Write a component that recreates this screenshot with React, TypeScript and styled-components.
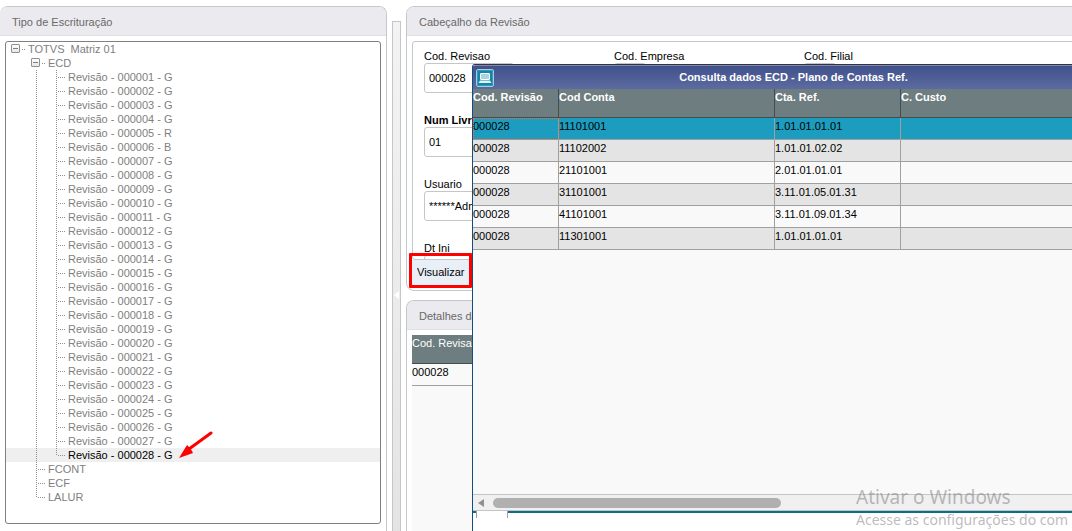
import React from 'react';
import styled, { createGlobalStyle } from 'styled-components';

const GlobalStyle = createGlobalStyle`
  *, *::before, *::after { box-sizing: border-box; }
  html, body, #root { height: 100%; }
  body {
    margin: 0;
    background: #fff;
    color: #000;
    font: 11px/14px "Liberation Sans", Arial, sans-serif;
    overflow: hidden;
  }
  button, input { font: inherit; color: inherit; }
  h1, h2, ul { margin: 0; padding: 0; }
`;

const Page = styled.main`
  display: grid;
  grid-template-columns: minmax(0, 387fr) 9px minmax(0, 666fr);
  column-gap: 5px;
  height: 100vh;
  padding-top: 6px;
`;

const Panel = styled.section<{ $closed?: boolean }>`
  display: flex;
  flex-direction: column;
  flex: ${(p) => (p.$closed ? 'none' : '1')};
  min-height: 0;
  border: 1px solid #c3c7c7;
  border-bottom-width: ${(p) => (p.$closed ? '1px' : '0')};
  border-radius: ${(p) => (p.$closed ? '8px' : '8px 8px 0 0')};
  background: #fff;
`;

const LeftPanel = styled(Panel)`
  border-left: 0;
`;

const PanelTitle = styled.h2`
  flex: none;
  height: 29px;
  padding: 8px 12px 0;
  border-bottom: 1px solid #e0e0e2;
  border-radius: 7px 7px 0 0;
  background: #ebeaef;
  color: #696969;
  font-size: 11px;
  font-weight: normal;
  line-height: 14px;
`;

const TreeBox = styled.div`
  flex: 1;
  min-height: 0;
  margin: 5px 5px 7px;
  border: 1px solid #808080;
  border-radius: 3px;
`;

const TreeList = styled.ul`
  list-style: none;
`;

const TreeRow = styled.div<{ $selected?: boolean }>`
  display: flex;
  height: 14px;
  padding-left: 2px;
  background: ${(p) => (p.$selected ? '#efefef' : 'transparent')};
  color: ${(p) => (p.$selected ? '#000' : '#808080')};
  white-space: pre;
`;

const TreeLabel = styled.span`
  position: relative;
`;

type GuideKind = 'blank' | 'line' | 'branch' | 'end' | 'toggle';

const down = 'repeating-linear-gradient(to bottom, #909090 0 1px, transparent 1px 2px)';
const across = 'repeating-linear-gradient(to right, #909090 0 1px, transparent 1px 2px)';
const guideLines: Record<GuideKind, string> = {
  blank: 'none',
  line: `${down} 8px 0 / 1px 14px no-repeat`,
  branch: `${down} 8px 0 / 1px 14px no-repeat, ${across} 10px 7px / 8px 1px no-repeat`,
  end: `${down} 8px 0 / 1px 8px no-repeat, ${across} 10px 7px / 8px 1px no-repeat`,
  toggle: `${across} 14px 7px / 4px 1px no-repeat`,
};

const Guide = styled.span<{ $kind: GuideKind }>`
  flex: none;
  display: flex;
  width: 20px;
  height: 14px;
  padding: 2px 0 0 3px;
  background: ${(p) => guideLines[p.$kind]};
`;

const Toggle = styled.button`
  display: flex;
  align-items: center;
  width: 9px;
  height: 9px;
  padding: 0 1px;
  border: 1px solid #909090;
  border-radius: 1px;
  background: linear-gradient(#fff, #e6e6e6);
  &::before {
    content: '';
    width: 5px;
    height: 1px;
    background: #808080;
  }
`;

const PointerArrow = styled.svg`
  position: absolute;
  left: calc(100% + 6px);
  bottom: 3px;
`;

const Splitter = styled.div`
  display: flex;
  align-items: center;
  margin-top: 15px;
  padding: 37px 0 0 1px;
  border: 1px solid #c3c7c7;
  border-bottom: 0;
  background: linear-gradient(#f3f3f3, #e4e4e4);
`;

const RightColumn = styled.div`
  position: relative;
  display: flex;
  flex-direction: column;
  gap: 9px;
  min-width: 0;
  margin-right: -8px;
`;

const FormBox = styled.form`
  height: 219px;
  margin: 5px 5px 0;
  padding: 8px 11px 0;
  border: 1px solid #c3c7c7;
  border-radius: 3px;
  overflow: hidden;
`;

const FieldGrid = styled.div`
  display: grid;
  grid-template-columns: repeat(3, 190px);
  row-gap: 21px;
`;

const Field = styled.label<{ $strong?: boolean; $first?: boolean }>`
  display: flex;
  flex-direction: column;
  grid-column: ${(p) => (p.$first ? '1' : 'auto')};
  line-height: 13px;
  font-weight: ${(p) => (p.$strong ? 'bold' : 'normal')};
`;

const FieldInput = styled.input<{ $wide?: boolean }>`
  width: ${(p) => (p.$wide ? '90px' : '32px')};
  height: 30px;
  padding: 0 4px;
  border: 1px solid #c3c7c7;
  border-radius: 3px;
  background: #fff;
  font-weight: normal;
`;

const Actions = styled.div`
  position: relative;
  padding: 0 0 5px 5px;
`;

const ViewButton = styled.button`
  display: block;
  height: 25px;
  padding: 0 8px 2px 5px;
  border: 0;
  background: #e8eff6;
`;

const Highlight = styled.span`
  position: absolute;
  z-index: 3;
  top: -7px;
  left: 2px;
  width: 63px;
  height: 35px;
  border: 3px solid #ff0000;
  border-radius: 1px;
  pointer-events: none;
`;

const DataTable = styled.table`
  width: 100%;
  table-layout: fixed;
  border-collapse: separate;
  border-spacing: 0;
  text-align: left;
`;

const HeadCell = styled.th<{ $plain?: boolean }>`
  height: 29px;
  padding: 0;
  border-right: 1px solid #454c4e;
  border-bottom: 1px solid #454c4e;
  background: #6e7d80;
  color: #fff;
  font-weight: ${(p) => (p.$plain ? 'normal' : 'bold')};
  line-height: 16px;
  vertical-align: top;
  white-space: nowrap;
  &:last-child { border-right: 0; }
`;

const Cell = styled.td`
  height: 22px;
  padding: 0;
  border-right: 1px solid #a0a0a0;
  border-bottom: 1px solid #a0a0a0;
  line-height: 16px;
  vertical-align: top;
  white-space: nowrap;
  &:last-child { border-right: 0; }
`;

const DataRow = styled.tr<{ $selected?: boolean }>`
  background: ${(p) => (p.$selected ? '#1c9dbf' : '#f9f9f9')};
  &:nth-child(even) { background: #e4e4e4; }
  td:first-child {
    outline: ${(p) => (p.$selected ? '1px dotted #ff6a3c' : 'none')};
    outline-offset: -1px;
  }
`;

const DetailArea = styled.div`
  flex: 1;
  margin: 5px 5px 0;
  background: #f9f9f9;
`;

const Dialog = styled.section`
  position: absolute;
  z-index: 2;
  top: 58px;
  right: 8px;
  bottom: 0;
  left: 66px;
  display: flex;
  flex-direction: column;
  border-top: 1px solid #35353d;
  border-left: 1px solid #174c80;
  border-radius: 3px 0 0 0;
  background: #fff;
  overflow: hidden;
`;

const TitleBar = styled.header`
  flex: none;
  display: grid;
  grid-template-columns: 20px 1fr 20px;
  align-items: center;
  height: 24px;
  padding: 0 3px;
  border-top: 1px solid #7d87ae;
  background: linear-gradient(#40508c, #5c6b9f);
`;

const DialogTitle = styled.h1`
  padding: 0 0 2px 42px;
  color: #fff;
  font-size: 11px;
  line-height: 14px;
  text-align: center;
`;

const GridBody = styled.div`
  flex: 1;
  min-height: 0;
  background: #f9f9f9;
`;

const ScrollTrack = styled.div`
  flex: none;
  display: grid;
  grid-template-columns: 20px minmax(0, 288fr) minmax(0, 291fr);
  align-items: center;
  height: 17px;
  border-top: 1px solid #c4c4c4;
  border-bottom: 1px solid #c4c4c4;
  background: #f0f0f0;
`;

const ScrollButton = styled.button`
  display: flex;
  align-items: center;
  height: 15px;
  padding: 0 0 0 5px;
  border: 0;
  background: none;
`;

const ScrollThumb = styled.div`
  height: 10px;
  border-radius: 5px;
  background: #b0b0b0;
`;

const DialogFooter = styled.footer`
  flex: none;
  height: 20px;
  padding-left: 3px;
  background: linear-gradient(#0d6e88 0 2px, #fff 2px);
`;

const FooterTab = styled.div`
  width: 32px;
  height: 7px;
  border: solid #a0a0a0;
  border-width: 0 1px;
  background: #fff;
`;

const Watermark = styled.aside`
  position: absolute;
  z-index: 4;
  right: 0;
  bottom: 0;
  width: 216px;
  color: rgba(130, 130, 130, 0.55);
  font-family: "Noto Sans", "Open Sans", sans-serif;
  font-size: 14px;
  line-height: 22px;
  white-space: nowrap;
  pointer-events: none;
`;

const WatermarkTitle = styled.div`
  font-size: 19px;
  line-height: 24px;
`;

interface TreeNode {
  label: string;
  guides: GuideKind[];
  selected?: boolean;
}

const revisions: TreeNode[] = Array.from({ length: 28 }, (_, i) => {
  const n = i + 1;
  const kind = n === 5 ? 'R' : n === 6 ? 'B' : 'G';
  return {
    label: `Revisão - ${String(n).padStart(6, '0')} - ${kind}`,
    guides: ['blank', 'line', n === 28 ? 'end' : 'branch'],
    selected: n === 28,
  };
});

const tree: TreeNode[] = [
  { label: 'TOTVS  Matriz 01', guides: ['toggle'] },
  { label: 'ECD', guides: ['blank', 'toggle'] },
  ...revisions,
  { label: 'FCONT', guides: ['blank', 'branch'] },
  { label: 'ECF', guides: ['blank', 'branch'] },
  { label: 'LALUR', guides: ['blank', 'end'] },
];

const accounts = [
  ['000028', '11101001', '1.01.01.01.01', ''],
  ['000028', '11102002', '1.01.01.02.02', ''],
  ['000028', '21101001', '2.01.01.01.01', ''],
  ['000028', '31101001', '3.11.01.05.01.31', ''],
  ['000028', '41101001', '3.11.01.09.01.34', ''],
  ['000028', '11301001', '1.01.01.01.01', ''],
];

function RedArrow() {
  return (
    <PointerArrow width="34" height="28" viewBox="0 0 34 28" aria-hidden="true">
      <path d="M32 2 10 18" stroke="#ff0000" strokeWidth="3" strokeLinecap="round" />
      <path d="M0 27 8 14 10 16 13 20 14 22Z" fill="#ff0000" />
    </PointerArrow>
  );
}

function WindowIcon() {
  return (
    <svg width="18" height="18" viewBox="0 0 18 18" aria-hidden="true">
      <rect x="0.5" y="0.5" width="17" height="17" rx="1.5" fill="#1285aa" stroke="#a9cbd9" />
      <rect x="1.5" y="1.5" width="15" height="15" rx="1" fill="none" stroke="#2f9dbd" />
      <rect x="4.5" y="4.5" width="9" height="6" rx="0.5" fill="#a9d3e1" stroke="#fff" />
      <path d="M4 11.500h10l1.500 2.500h-13z" fill="#e3f1f6" />
    </svg>
  );
}

export default function App() {
  return (
    <>
      <GlobalStyle />
      <Page>
        <LeftPanel>
          <PanelTitle>Tipo de Escrituração</PanelTitle>
          <TreeBox>
            <TreeList>
              {tree.map((node) => (
                <li key={node.label}>
                  <TreeRow $selected={node.selected}>
                    {node.guides.map((kind, i) => (
                      <Guide key={i} $kind={kind}>
                        {kind === 'toggle' && <Toggle type="button" aria-label={`Recolher ${node.label}`} />}
                      </Guide>
                    ))}
                    <TreeLabel>
                      {node.label}
                      {node.selected && <RedArrow />}
                    </TreeLabel>
                  </TreeRow>
                </li>
              ))}
            </TreeList>
          </TreeBox>
        </LeftPanel>

        <Splitter>
          <svg width="5" height="8" viewBox="0 0 5 8" aria-hidden="true">
            <path d="M5 0v8L0 4z" fill="#fff" />
          </svg>
        </Splitter>

        <RightColumn>
          <Panel $closed>
            <PanelTitle>Cabeçalho da Revisão</PanelTitle>
            <FormBox>
              <FieldGrid>
                <Field>
                  Cod. Revisao
                  <FieldInput $wide defaultValue="000028" />
                </Field>
                <Field>
                  Cod. Empresa
                  <FieldInput />
                </Field>
                <Field>
                  Cod. Filial
                  <FieldInput />
                </Field>
                <Field $first $strong>
                  Num Livro
                  <FieldInput $wide defaultValue="01" />
                </Field>
                <Field $first>
                  Usuario
                  <FieldInput $wide defaultValue="******Admin" />
                </Field>
                <Field $first>
                  Dt Ini
                  <FieldInput $wide />
                </Field>
              </FieldGrid>
            </FormBox>
            <Actions>
              <ViewButton type="button">Visualizar</ViewButton>
              <Highlight />
            </Actions>
          </Panel>

          <Panel>
            <PanelTitle>Detalhes da Revisão</PanelTitle>
            <DetailArea>
              <DataTable>
                <thead>
                  <tr>
                    <HeadCell $plain>Cod. Revisao</HeadCell>
                  </tr>
                </thead>
                <tbody>
                  <DataRow>
                    <Cell>000028</Cell>
                  </DataRow>
                </tbody>
              </DataTable>
            </DetailArea>
          </Panel>

          <Dialog role="dialog" aria-labelledby="dialog-title">
            <TitleBar>
              <WindowIcon />
              <DialogTitle id="dialog-title">Consulta dados ECD - Plano de Contas Ref.</DialogTitle>
            </TitleBar>
            <GridBody>
              <DataTable>
                <colgroup>
                  <col style={{ width: 86 }} />
                  <col style={{ width: 216 }} />
                  <col style={{ width: 126 }} />
                  <col />
                </colgroup>
                <thead>
                  <tr>
                    <HeadCell>Cod. Revisão</HeadCell>
                    <HeadCell>Cod Conta</HeadCell>
                    <HeadCell>Cta. Ref.</HeadCell>
                    <HeadCell>C. Custo</HeadCell>
                  </tr>
                </thead>
                <tbody>
                  {accounts.map((row, i) => (
                    <DataRow key={row[1]} $selected={i === 0}>
                      {row.map((value, c) => (
                        <Cell key={c}>{value}</Cell>
                      ))}
                    </DataRow>
                  ))}
                </tbody>
              </DataTable>
            </GridBody>
            <ScrollTrack>
              <ScrollButton type="button" aria-label="Rolar para a esquerda">
                <svg width="6" height="8" viewBox="0 0 6 8" aria-hidden="true">
                  <path d="M6 0v8L0 4z" fill="#909090" />
                </svg>
              </ScrollButton>
              <ScrollThumb />
            </ScrollTrack>
            <DialogFooter>
              <FooterTab />
            </DialogFooter>
          </Dialog>
        </RightColumn>
      </Page>
      <Watermark>
        <WatermarkTitle>Ativar o Windows</WatermarkTitle>
        Acesse as configurações do com
      </Watermark>
    </>
  );
}
